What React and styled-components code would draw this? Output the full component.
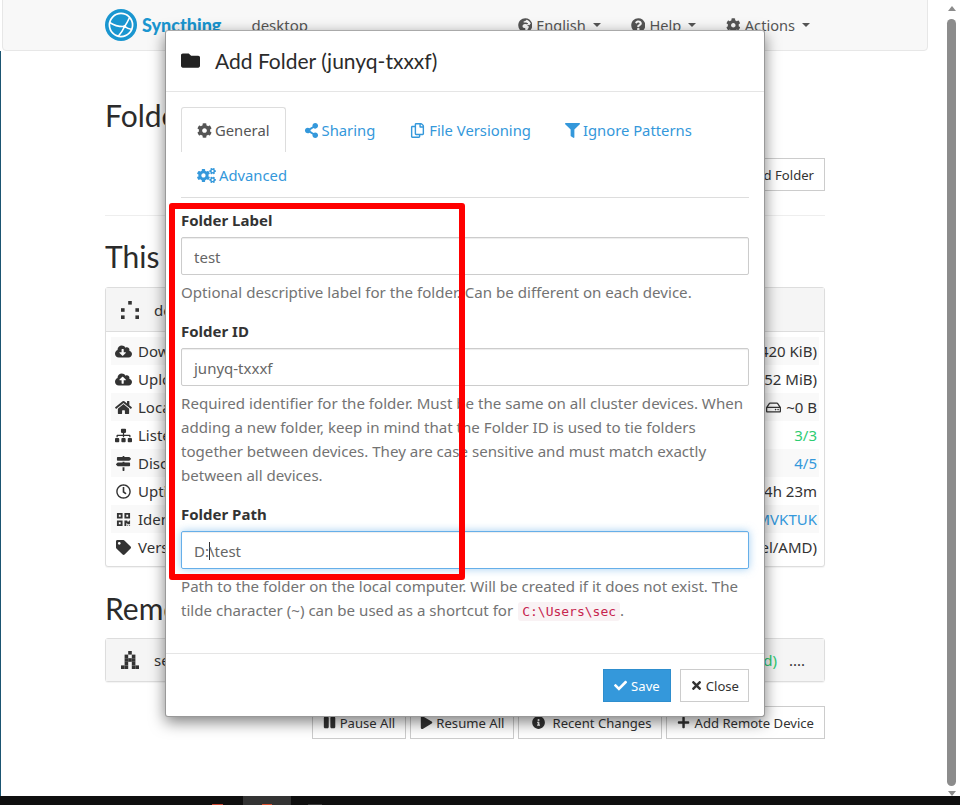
import React from "react";
import styled, { createGlobalStyle } from "styled-components";
import {
  FaFolder, FaCog, FaShareAlt, FaRegCopy, FaFilter, FaCogs, FaCheck, FaTimes,
  FaPause, FaPlay, FaInfoCircle, FaPlus, FaGlobeAfrica, FaQuestionCircle,
  FaCloudDownloadAlt, FaCloudUploadAlt, FaHome, FaSitemap, FaMapSigns,
  FaRegClock, FaQrcode, FaTag, FaRegHdd,
} from "react-icons/fa";

const GlobalStyle = createGlobalStyle`
  html, body { margin: 0; padding: 0; height: 100%; overflow: hidden; background: #fff; }
  body { font-family: "Noto Sans", "Open Sans", sans-serif; font-size: 15px; color: #333; }
  * { box-sizing: border-box; }
`;

const Screen = styled.div`
  position: relative;
  width: 960px;
  height: 805px;
  overflow: hidden;
  display: flex;
  flex-direction: column;
`;
const Viewport = styled.div`
  flex: 1;
  display: flex;
  min-height: 0;
`;
const Page = styled.div`
  position: relative;
  flex: 1;
  padding-left: 2px;
  padding-right: 17px;
  &::before {
    content: "";
    position: absolute;
    left: 0;
    top: 51px;
    bottom: 0;
    width: 1px;
    background: #1b5572;
  }
`;
const Scrollbar = styled.div`
  width: 15px;
  padding: 6px 2px 0 0;
  display: flex;
  flex-direction: column;
  align-items: center;
`;
const Arrow = styled.div`
  flex: none;
  width: 0;
  height: 0;
  border-left: 4px solid transparent;
  border-right: 4px solid transparent;
  border-${(p) => (p.$down ? "top" : "bottom")}: 5px solid #8c8c8c;
`;
const Thumb = styled.div`
  flex: 1;
  width: 9px;
  margin: 8px 0 5px;
  border-radius: 5px;
  background: #8c8c8c;
`;
const Taskbar = styled.div`
  height: 9px;
  flex: none;
  background: #0f0f0f;
  display: flex;
  align-items: flex-end;
  padding-left: 212px;
`;
const TaskItem = styled.div`
  width: 48px;
  height: 9px;
  margin-left: 20px;
  background: #333;
  display: flex;
  align-items: flex-end;
  justify-content: center;
`;
const TaskGlow = styled.div`
  width: ${(p) => p.$width}px;
  height: 1px;
  margin-left: ${(p) => p.$left || 0}px;
  background: ${(p) => p.$color};
`;

const Navbar = styled.div`
  height: 52px;
  margin-top: -1px;
  background: #f8f8f8;
  border: 1px solid #e7e7e7;
  border-radius: 0 0 4px 4px;
  padding: 0 117px 0 102px;
  display: flex;
  align-items: center;
`;
const Brand = styled.div`
  display: flex;
  align-items: center;
  gap: 5px;
  font-family: "Lato", sans-serif;
  font-weight: 900;
  font-size: 18px;
  color: #1a96d0;
`;
const DeviceName = styled.div`
  margin-left: 30px;
  color: #555;
`;
const NavMenu = styled.div`
  margin-left: auto;
  display: flex;
  gap: 30px;
  color: #555;
  font-size: 14.6px;
`;
const NavItem = styled.div`
  display: flex;
  align-items: center;
  gap: 4px;
`;
const Caret = styled.span`
  width: 0;
  height: 0;
  margin-left: 3px;
  border-left: 4px solid transparent;
  border-right: 4px solid transparent;
  border-top: 4px solid #555;
`;
const Container = styled.div`
  width: 720px;
  margin-left: 103px;
`;
const Heading = styled.h3`
  margin: ${(p) => p.$top}px 0 0;
  height: 36px;
  line-height: 36px;
  font-family: "Lato", sans-serif;
  font-weight: 400;
  font-size: 30px;
  color: #2b2b2b;
`;
const ButtonRow = styled.div`
  display: flex;
  justify-content: flex-end;
  gap: 4px;
  margin-top: ${(p) => p.$top}px;
`;
const Button = styled.div`
  height: 33px;
  padding: 0 ${(p) => (p.$tight ? 9 : 10)}px 0 ${(p) => p.$lead ?? (p.$tight ? 9 : 10)}px;
  display: flex;
  align-items: center;
  gap: ${(p) => p.$gap ?? (p.$tight ? 3 : 4)}px;
  background: ${(p) => (p.$primary ? "#3498db" : "#fff")};
  border: 1px solid ${(p) => (p.$primary ? "#2e8ece" : "#ccc")};
  color: ${(p) => (p.$primary ? "#fff" : "#333")};
  font-size: 13.1px;
`;
const Rule = styled.hr`
  border: 0;
  border-top: 1px solid #eee;
  margin: 24px 0 0;
`;
const Panel = styled.div`
  margin-top: ${(p) => p.$top}px;
  background: #fff;
  border: 1px solid #ddd;
  border-radius: 3px;
  box-shadow: 0 1px 1px rgba(0, 0, 0, 0.05);
`;
const PanelHead = styled.div`
  height: ${(p) => p.$height}px;
  background: #f5f5f5;
  padding: 0 19px 0 15px;
  display: flex;
  align-items: center;
  gap: 15px;
  color: #333;
`;
const PanelBody = styled.div`
  border-top: 1px solid #ddd;
  padding: 5px;
`;
const Row = styled.div`
  height: 28px;
  display: flex;
  align-items: center;
  justify-content: space-between;
  padding: 0 2px 0 4px;
  background: ${(p) => (p.$odd ? "#f9f9f9" : "#fff")};
  color: #333;
`;
const RowLabel = styled.div`
  display: flex;
  align-items: center;
  gap: 6px;
  svg { width: 17px; height: 15px; }
`;
const RowValue = styled.div`
  display: flex;
  align-items: center;
  gap: 5px;
  color: ${(p) => p.$color || "#333"};
`;
const Status = styled.span`
  margin-left: auto;
  color: #2ecc71;
`;
const Dots = styled.span`
  margin-left: -3px;
`;

const Modal = styled.div`
  position: absolute;
  left: 165px;
  top: 30px;
  width: 600px;
  height: 687px;
  background: #fff;
  border: 1px solid #999;
  border-top-color: #aaa;
  border-radius: 3px;
  box-shadow: 0 5px 15px rgba(0, 0, 0, 0.5);
  display: flex;
  flex-direction: column;
`;
const ModalHead = styled.div`
  height: 61px;
  flex: none;
  border-bottom: 1px solid #e5e5e5;
  padding: 0 15px 2px;
  display: flex;
  align-items: center;
  gap: 15px;
  font-family: "Lato", sans-serif;
  font-size: 21px;
  color: #2b2b2b;
  svg { color: #222; width: 19px; height: 19px; }
`;
const ModalBody = styled.div`
  flex: 1;
  padding: 15px 15px 0;
`;
const Tabs = styled.div`
  display: flex;
  flex-wrap: wrap;
  border-bottom: 1px solid #ddd;
  margin-bottom: 12px;
`;
const Tab = styled.div`
  height: 45px;
  padding: 0 15px;
  margin-right: 2px;
  display: flex;
  align-items: center;
  gap: 3px;
  font-size: 14.8px;
  color: ${(p) => (p.$active ? "#555" : "#3498db")};
  border: 1px solid ${(p) => (p.$active ? "#ddd" : "transparent")};
  border-bottom: 0;
  border-radius: 3px 3px 0 0;
  svg { width: ${(p) => p.$icon || 15}px; height: 15px; }
`;
const Field = styled.div`
  margin-bottom: ${(p) => p.$gap}px;
`;
const Label = styled.div`
  font-weight: 700;
  line-height: 20px;
  color: #333;
  margin-bottom: 7px;
`;
const Input = styled.div`
  height: 38px;
  padding: 2px 12px 0;
  display: flex;
  align-items: center;
  border: 1px solid ${(p) => (p.$focus ? "#66afe9" : "#ccc")};
  border-radius: 2px;
  box-shadow: ${(p) =>
    p.$focus
      ? "inset 0 1px 1px rgba(0,0,0,.075), 0 0 8px rgba(102,175,233,.6)"
      : "inset 0 1px 1px rgba(0,0,0,.075)"};
  color: #666;
`;
const Cursor = styled.span`
  display: inline-block;
  width: 1px;
  height: 18px;
  background: #333;
  margin: 0 -1px 0 0;
`;
const Help = styled.div`
  margin-top: 5px;
  font-size: 15.1px;
  line-height: 24px;
  color: #737373;
`;
const Code = styled.code`
  font-family: "DejaVu Sans Mono", "Liberation Mono", monospace;
  font-size: 13px;
  color: #c7254e;
  background: #f9f2f4;
  padding: 2px 4px;
  border-radius: 3px;
  margin-left: 1px;
`;
const ModalFoot = styled.div`
  height: 63px;
  flex: none;
  border-top: 1px solid #e5e5e5;
  padding: 15px 15px 0;
  display: flex;
  justify-content: flex-end;
  gap: 9px;
`;
const Highlight = styled.div`
  position: absolute;
  left: 169px;
  top: 203px;
  width: 296px;
  height: 377px;
  border: 6px solid #ff0000;
  border-radius: 3px;
`;

const Identicon = ({ cells }) => (
  <svg width="18" height="18" viewBox="0 0 5 5" fill="#333">
    {cells.map(([x, y]) => (
      <rect key={`${x}-${y}`} x={x} y={y} width="1" height="1" />
    ))}
  </svg>
);

const Logo = () => (
  <svg width="32" height="32" viewBox="0 0 32 32">
    <circle cx="16" cy="16" r="16" fill="#1a96d0" />
    <circle cx="16" cy="16" r="11.6" fill="none" stroke="#fff" strokeWidth="1.7" />
    <path d="M4.6 13.5c5 3.2 10 4.3 15 4M19.6 17.5c2-3 3.6-6 5-9M19.6 17.5c-1.5 3.5-4 7-6.5 10M19.6 17.5c2 1.600 5 2.700 7.500 3" fill="none" stroke="#fff" strokeWidth="1.6" />
    <circle cx="19.6" cy="17.500" r="1.600" fill="#fff" />
  </svg>
);

const rows = [
  { icon: <FaCloudDownloadAlt />, label: "Download Rate", value: "0 B/s (1.420 KiB)" },
  { icon: <FaCloudUploadAlt />, label: "Upload Rate", value: "0 B/s (7.52 MiB)" },
  { icon: <FaHome />, label: "Local State (Total)", value: <><FaRegHdd /> ~0 B</> },
  { icon: <FaSitemap />, label: "Listeners", value: "3/3", color: "#2ecc71" },
  { icon: <FaMapSigns />, label: "Discovery", value: "4/5", color: "#3498db" },
  { icon: <FaRegClock />, label: "Uptime", value: "4h 23m" },
  { icon: <FaQrcode />, label: "Identification", value: "XUAEVBG-MVKTUK", color: "#3498db" },
  { icon: <FaTag />, label: "Version", value: "v1.18.6, Windows (64 bit Intel/AMD)" },
];

export default function App() {
  return (
    <Screen>
      <GlobalStyle />
      <Viewport>
        <Page>
          <Navbar>
            <Brand><Logo />Syncthing</Brand>
            <DeviceName>desktop</DeviceName>
            <NavMenu>
              <NavItem><FaGlobeAfrica />English<Caret /></NavItem>
              <NavItem><FaQuestionCircle />Help<Caret /></NavItem>
              <NavItem><FaCog />Actions<Caret /></NavItem>
            </NavMenu>
          </Navbar>
          <Container>
            <Heading $top={46}>Folders</Heading>
            <ButtonRow $top={25}>
              <Button><FaPlus />Add Folder</Button>
            </ButtonRow>
            <Rule />
            <Heading $top={22}>This Device</Heading>
            <Panel $top={13}>
              <PanelHead $height={43}>
                <Identicon cells={[[2, 0], [0, 2], [4, 2], [0, 4], [4, 4]]} />
                desktop
              </PanelHead>
              <PanelBody>
                {rows.map((r, i) => (
                  <Row key={r.label} $odd={i % 2 === 0}>
                    <RowLabel>{r.icon}{r.label}</RowLabel>
                    <RowValue $color={r.color}>{r.value}</RowValue>
                  </Row>
                ))}
              </PanelBody>
            </Panel>
            <Heading $top={23}>Remote Devices</Heading>
            <Panel $top={12}>
              <PanelHead $height={42}>
                <Identicon cells={[[2, 0], [1, 1], [3, 1], [1, 2], [2, 2], [3, 2], [1, 3], [3, 3], [0, 4], [1, 4], [3, 4], [4, 4]]} />
                <span>server</span>
                <Status>(Connected)</Status>
                <Dots>....</Dots>
              </PanelHead>
            </Panel>
            <ButtonRow $top={24}>
              <Button><FaPause />Pause All</Button>
              <Button $tight><FaPlay />Resume All</Button>
              <Button $lead={13} $gap={7}><FaInfoCircle />Recent Changes</Button>
              <Button><FaPlus />Add Remote Device</Button>
            </ButtonRow>
          </Container>
        </Page>
        <Scrollbar>
          <Arrow />
          <Thumb />
          <Arrow $down />
        </Scrollbar>
      </Viewport>
      <Taskbar>
        <TaskGlow $width={11} $color="#c8452f" />
        <TaskItem><TaskGlow $width={10} $color="#d8502f" /></TaskItem>
        <TaskGlow $width={14} $left={17} $color="#3a3a3a" />
      </Taskbar>

      <Modal>
        <ModalHead><FaFolder />Add Folder (junyq-txxxf)</ModalHead>
        <ModalBody>
          <Tabs>
            <Tab $active><FaCog />General</Tab>
            <Tab><FaShareAlt />Sharing</Tab>
            <Tab $icon={17}><FaRegCopy />File Versioning</Tab>
            <Tab><FaFilter />Ignore Patterns</Tab>
            <Tab $icon={19}><FaCogs />Advanced</Tab>
          </Tabs>
          <Field $gap={17}>
            <Label>Folder Label</Label>
            <Input>test</Input>
            <Help>Optional descriptive label for the folder. Can be different on each device.</Help>
          </Field>
          <Field $gap={17}>
            <Label>Folder ID</Label>
            <Input>junyq-txxxf</Input>
            <Help>
              Required identifier for the folder. Must be the same on all cluster devices. When
              adding a new folder, keep in mind that the Folder ID is used to tie folders
              together between devices. They are case sensitive and must match exactly
              between all devices.
            </Help>
          </Field>
          <Field $gap={0}>
            <Label>Folder Path</Label>
            <Input $focus>D:<Cursor />\test</Input>
            <Help>
              Path to the folder on the local computer. Will be created if it does not exist. The
              tilde character (~) can be used as a shortcut for <Code>C:\Users\sec</Code>.
            </Help>
          </Field>
        </ModalBody>
        <ModalFoot>
          <Button $primary><FaCheck />Save</Button>
          <Button $tight><FaTimes />Close</Button>
        </ModalFoot>
      </Modal>
      <Highlight />
    </Screen>
  );
}
